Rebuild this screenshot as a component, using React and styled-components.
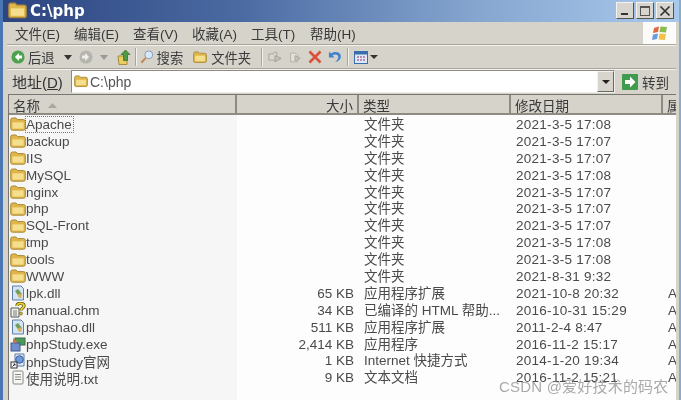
import React from 'react'
import styled, { createGlobalStyle } from 'styled-components'

const Global = createGlobalStyle`
  html, body { margin: 0; padding: 0; background: #d4d0c8; overflow: hidden; }
  * { box-sizing: border-box; }
`
const FONT = `"Liberation Sans", "Noto Sans CJK SC", sans-serif`

const Win = styled.div`
  width: 681px;
  height: 400px;
  display: flex;
  flex-direction: column;
  overflow: hidden;
  position: relative;
  font-family: ${FONT};
  color: #333;
  background: #d6d3cb;
  border-left: 3px solid #4a76b4;
  border-right: 2px solid #8fa9c8;
  filter: blur(0.4px);
`
const TitleBar = styled.div`
  height: 22px;
  flex: none;
  margin-left: -3px;
  margin-right: -2px;
  padding: 0 7px 1px 8px;
  display: flex;
  align-items: center;
  gap: 3px;
  background: linear-gradient(90deg, #2c4480 0%, #4b6aa2 35%, #86a6d0 70%, #a9c9ec 100%);
`
const TitleText = styled.div`
  flex: 1;
  color: #fff;
  font-size: 15px;
  font-weight: 700;
  font-family: "DejaVu Sans", sans-serif;
`
const WinBtns = styled.div`
  display: flex;
  gap: 2px;
`
const WinBtn = styled.div`
  width: 18px;
  height: 17px;
  background: #d8d5ce;
  border: 1px solid;
  border-color: #f4f2ee #55534e #55534e #f4f2ee;
  display: flex;
  align-items: center;
  justify-content: center;
`
const Body = styled.div`
  flex: 1;
  min-height: 0;
  display: flex;
  flex-direction: column;
  padding: 0 3px 0 4px;
`
const MenuBar = styled.div`
  height: 23px;
  flex: none;
  display: flex;
  align-items: center;
  padding-left: 8px;
  border-bottom: 1px solid #a9a69f;
`
const MenuItem = styled.div`
  width: 59px;
  font-size: 13.5px;
  color: #3a3a3a;
  white-space: nowrap;
`
const Logo = styled.div`
  margin-left: auto;
  width: 33px;
  height: 22px;
  background: #fbfbf9;
  display: flex;
  align-items: center;
  justify-content: center;
`
const Toolbar = styled.div`
  height: 24px;
  flex: none;
  display: flex;
  align-items: center;
  padding-left: 4px;
  border-top: 1px solid #f4f2ec;
  border-bottom: 1px solid #a9a69f;
`
const ToolLabel = styled.span`
  font-size: 13.3px;
  color: #3a3a3a;
  margin-left: ${p => p.$ml || 2}px;
  margin-right: ${p => p.$mr || 0}px;
  white-space: nowrap;
`
const Sep = styled.div`
  width: 2px;
  height: 18px;
  margin: ${p => p.$m || '0 4px'};
  border-left: 1px solid #a9a69f;
  border-right: 1px solid #f4f2ec;
`
const Tool = styled.svg`
  flex: none;
  margin-right: ${p => p.$mr || 0}px;
  margin-left: ${p => p.$ml || 0}px;
`
const AddressBar = styled.div`
  height: 24px;
  flex: none;
  display: flex;
  align-items: center;
  padding-left: 5px;
  border-top: 1px solid #f4f2ec;
`
const AddrLabel = styled.div`
  font-size: 15px;
  width: 59px;
  color: #333;
  white-space: nowrap;
`
const Combo = styled.div`
  width: 544px;
  height: 23px;
  background: #fff;
  border: 1px solid;
  border-color: #8e8b84 #f0eee8 #f0eee8 #8e8b84;
  display: flex;
  align-items: center;
  padding-left: 2px;
  gap: 2px;
  font-size: 14px;
  color: #555;
`
const ComboArrow = styled.div`
  margin-left: auto;
  width: 17px;
  height: 21px;
  background: #d8d5ce;
  border: 1px solid;
  border-color: #f4f2ee #6b6964 #6b6964 #f4f2ee;
  display: flex;
  align-items: center;
  justify-content: center;
`
const Go = styled.div`
  display: flex;
  align-items: center;
  gap: 4px;
  margin-left: 7px;
  font-size: 13.5px;
  color: #3a3a3a;
`
const ListFrame = styled.div`
  flex: 1;
  min-height: 0;
  margin-top: 1px;
  margin-left: 1px;
  background: linear-gradient(90deg, #f6f6f6 228px, #fdfdfd 228px);
  border-left: 1px solid #77756f;
  border-top: 1px solid #77756f;
  overflow: hidden;
`
const cols = '228px 122px 152px 152px 1fr'
const Header = styled.div`
  display: grid;
  grid-template-columns: ${cols};
  height: 20px;
  background: #d6d3cb;
  border-bottom: 2px solid #8e8b84;
`
const HeadCell = styled.div`
  font-size: 13.5px;
  color: #3a3a3a;
  padding: 0 4px;
  display: flex;
  align-items: center;
  justify-content: ${p => (p.$right ? 'flex-end' : 'flex-start')};
  gap: 8px;
  border-right: 2px solid #8e8b84;
  white-space: nowrap;
  &:last-child { border-right: 0; }
`
const Rows = styled.div`
  display: grid;
  grid-template-columns: ${cols};
  grid-auto-rows: 16.9px;
  padding-top: 1px;
`
const NameCell = styled.div`
  display: flex;
  align-items: center;
  padding-left: 1px;
  font-size: 13.5px;
  color: #4a4a4a;
  white-space: nowrap;
`
const NameText = styled.span`
  padding: 0 1px 0 0;
  outline: ${p => (p.$focus ? '1px dotted #777' : 'none')};
`
const Cell = styled.div`
  font-size: 13.5px;
  color: #4a4a4a;
  padding: ${p => (p.$right ? '0 5px 0 0' : '0 0 0 5px')};
  text-align: ${p => (p.$right ? 'right' : 'left')};
  letter-spacing: ${p => (p.$date ? '0.27px' : '0')};
  line-height: 17px;
  white-space: nowrap;
  overflow: hidden;
`
const Watermark = styled.div`
  position: absolute;
  left: 496px;
  top: 375px;
  font-size: 15px;
  letter-spacing: 0.2px;
  color: rgba(125, 125, 125, 0.65);
  white-space: nowrap;
`

const Folder = ({ size = 16 }) => (
  <svg width={size} height={size * 0.875} viewBox="0 0 16 14" style={{ flex: 'none' }}>
    <path d="M.7 3 Q.7 1 2.5 1 H6 L7.5 2.6 H13.5 Q15.3 2.6 15.3 4.5 V11.5 Q15.3 13.2 13.5 13.2 H2.5 Q.7 13.2 .7 11.5 Z" fill="#e0b64a" stroke="#a98a3a" />
    <path d="M2.4 5.4 H13.6 V11.6 H2.4 Z" fill="#f5df8e" />
  </svg>
)

const Dll = () => (
  <svg width="16" height="17" viewBox="0 0 16 17" style={{ flex: 'none' }}>
    <path d="M2.5 1 H11 L13.5 3.5 V15 H2.5 Z" fill="#d4e3f6" stroke="#5f7ea8" />
    <path d="M5 6 L8 4 L12 9 L9.5 12.5 Z" fill="#6f9f58" />
    <path d="M8 9 L11.5 8.5 L11.5 13 L8.5 12.5 Z" fill="#d8b258" />
  </svg>
)
const Chm = () => (
  <svg width="16" height="17" viewBox="0 0 16 17" style={{ flex: 'none' }}>
    <path d="M1 6 H9 V15 H1 Z" fill="#f2f2ec" stroke="#555" />
    <path d="M3 9 H7 M3 11 H7 M3 13 H7" stroke="#777" />
    <path d="M7 4 C7 .5 14 .5 14 4 C14 6 11 6 11 8.5" fill="none" stroke="#5c5427" strokeWidth="3.2" />
    <path d="M7 4 C7 .5 14 .5 14 4 C14 6 11 6 11 8.5" fill="none" stroke="#edd21f" strokeWidth="1.8" />
    <circle cx="11" cy="11.5" r="1.5" fill="#d8bd1c" stroke="#5c5427" strokeWidth=".6" />
  </svg>
)
const Exe = () => (
  <svg width="16" height="17" viewBox="0 0 16 17" style={{ flex: 'none' }}>
    <rect x="5" y="2" width="10" height="7" fill="#4d9a55" stroke="#3d6a45" />
    <rect x="1" y="7" width="9" height="8" fill="#6f8ecb" stroke="#3e5a8f" />
    <path d="M3 2 L8 6 L3 7.5 Z" fill="#c9774f" />
  </svg>
)
const Shortcut = () => (
  <svg width="16" height="17" viewBox="0 0 16 17" style={{ flex: 'none' }}>
    <path d="M5 2 H14 V14 H5 Z" fill="#e6eef8" stroke="#5c79a8" />
    <circle cx="9.5" cy="7.5" r="3.8" fill="#6d9adb" stroke="#3a5f9a" />
    <rect x="1" y="10" width="6" height="6" fill="#fff" stroke="#333" />
    <path d="M2.5 14.5 L5 12 M3.5 12 H5 V13.5" fill="none" stroke="#222" />
  </svg>
)
const Txt = () => (
  <svg width="16" height="17" viewBox="0 0 16 17" style={{ flex: 'none' }}>
    <rect x="3" y="2" width="10" height="13" rx="1" fill="#f7f7f2" stroke="#888" />
    <path d="M5 5.5 H11 M5 8 H11 M5 10.5 H11" stroke="#888" />
    <rect x="6" y="1" width="4" height="2" fill="#bbb" />
  </svg>
)

const d = '文件夹'
const rows = [
  ['Apache', '', d, '2021-3-5 17:08', '', Folder],
  ['backup', '', d, '2021-3-5 17:07', '', Folder],
  ['IIS', '', d, '2021-3-5 17:07', '', Folder],
  ['MySQL', '', d, '2021-3-5 17:08', '', Folder],
  ['nginx', '', d, '2021-3-5 17:07', '', Folder],
  ['php', '', d, '2021-3-5 17:07', '', Folder],
  ['SQL-Front', '', d, '2021-3-5 17:07', '', Folder],
  ['tmp', '', d, '2021-3-5 17:08', '', Folder],
  ['tools', '', d, '2021-3-5 17:08', '', Folder],
  ['WWW', '', d, '2021-8-31 9:32', '', Folder],
  ['lpk.dll', '65 KB', '应用程序扩展', '2021-10-8 20:32', 'A', Dll],
  ['manual.chm', '34 KB', '已编译的 HTML 帮助...', '2016-10-31 15:29', 'A', Chm],
  ['phpshao.dll', '511 KB', '应用程序扩展', '2011-2-4 8:47', 'A', Dll],
  ['phpStudy.exe', '2,414 KB', '应用程序', '2016-11-2 15:17', 'A', Exe],
  ['phpStudy官网', '1 KB', 'Internet 快捷方式', '2014-1-20 19:34', 'A', Shortcut],
  ['使用说明.txt', '9 KB', '文本文档', '2016-11-2 15:21', 'A', Txt],
]

const menus = ['文件(E)', '编辑(E)', '查看(V)', '收藏(A)', '工具(T)', '帮助(H)']

export default function App() {
  return (
    <Win>
      <Global />
      <TitleBar>
        <Folder size={19} />
        <TitleText>C:\php</TitleText>
        <WinBtns>
          <WinBtn>
            <svg width="10" height="10"><rect x="1" y="7" width="7" height="2" fill="#333" /></svg>
          </WinBtn>
          <WinBtn>
            <svg width="12" height="12"><rect x="1.5" y="1.5" width="9" height="9" fill="none" stroke="#555" /><rect x="1" y="1" width="10" height="2" fill="#555" /></svg>
          </WinBtn>
          <WinBtn>
            <svg width="12" height="12"><path d="M1.5 1.5 L10.5 10.5 M10.5 1.5 L1.5 10.5" stroke="#333" strokeWidth="1.7" /></svg>
          </WinBtn>
        </WinBtns>
      </TitleBar>
      <Body>
        <MenuBar>
          {menus.map(m => <MenuItem key={m}>{m}</MenuItem>)}
          <Logo>
            <svg width="18" height="17" viewBox="0 0 18 17">
              <path d="M3 3 L8 1.5 L7 7 L2 8 Z" fill="#e0693e" />
              <path d="M9.5 1.5 L16 2 L15 7.5 L8.5 7 Z" fill="#8cbb4f" />
              <path d="M2 9.5 L7 8.5 L6 14 L1 15 Z" fill="#6a9bdc" />
              <path d="M8.5 8.5 L15 9 L14 15 L7.5 14.5 Z" fill="#efc24a" />
            </svg>
          </Logo>
        </MenuBar>
        <Toolbar>
          <Tool width="14" height="14" viewBox="0 0 16 16">
            <circle cx="8" cy="8" r="7.5" fill="#4ea24e" />
            <path d="M9 3.5 L4.5 8 L9 12.5 V9.8 H12.5 V6.2 H9 Z" fill="#fff" />
          </Tool>
          <ToolLabel $ml={3}>后退</ToolLabel>
          <Tool $ml={9} width="8" height="5" viewBox="0 0 8 5"><path d="M0 0 H8 L4 5 Z" fill="#333" /></Tool>
          <Tool $ml={7} width="14" height="14" viewBox="0 0 16 16">
            <circle cx="8" cy="8" r="7.5" fill="#b6b4ae" />
            <path d="M7 3.5 L11.5 8 L7 12.5 V9.8 H3.5 V6.2 H7 Z" fill="#eeeeea" />
          </Tool>
          <Tool $ml={7} width="8" height="5" viewBox="0 0 8 5"><path d="M0 0 H8 L4 5 Z" fill="#999" /></Tool>
          <Tool $ml={9} width="14" height="17" viewBox="0 0 14 17">
            <path d="M1 7 H5 L10 7 V15.5 H2 Z" fill="#eccd62" stroke="#a58d3f" />
            <path d="M8.5 1 L13 5.5 H10.5 V11.5 H6.5 V5.5 H4 Z" fill="#4f9a45" stroke="#2c6b2c" strokeWidth=".7" />
          </Tool>
          <Sep $m="0 3px 0 4px" />
          <Tool width="14" height="16" viewBox="0 0 16 17">
            <circle cx="10" cy="6" r="4.5" fill="#d9e8f7" stroke="#7c93ad" />
            <path d="M6.5 9.5 L1.5 15" stroke="#c58a4f" strokeWidth="2.4" />
          </Tool>
          <ToolLabel $ml={3} $mr={10}>搜索</ToolLabel>
          <Folder size={14} />
          <ToolLabel $ml={4}>文件夹</ToolLabel>
          <Sep $m="0 5px 0 10px" />
          <Tool width="14" height="14" viewBox="0 0 16 15">
            <path d="M1 4 H6 L7 2 H10 V11 H1 Z" fill="#d9d7d0" stroke="#a5a29b" />
            <path d="M8 6 L15 9 L8 13 Z" fill="#c4c2bb" stroke="#9d9a93" />
          </Tool>
          <Tool $ml={6} width="14" height="14" viewBox="0 0 16 15">
            <path d="M3 3 H8 L11 5 V13 H3 Z" fill="#e2e0d9" stroke="#aeaba4" />
            <path d="M8 6 L14 9 L8 12 Z" fill="#c9c7c0" stroke="#a5a29b" />
          </Tool>
          <Tool $ml={6} width="14" height="14" viewBox="0 0 14 14">
            <path d="M1.5 1.5 L12.5 12.5 M12.5 1.5 L1.5 12.5" stroke="#d9503b" strokeWidth="2.6" />
          </Tool>
          <Tool $ml={6} width="14" height="14" viewBox="0 0 15 15">
            <path d="M1 2 V8 H7 L4.8 6 C7 4 10.5 4.5 11 7 C11.3 9 10 11 7.5 13 C11 12.5 14 10 13.8 6.5 C13.5 2.5 8 .5 3.4 3.8 Z" fill="#3f83d0" />
          </Tool>
          <Sep $m="0 5px" />
          <Tool width="14" height="13" viewBox="0 0 14 13">
            <rect x=".5" y=".5" width="13" height="12" fill="#dce9f9" stroke="#3a6cb0" />
            <rect x="1" y="1" width="12" height="2.5" fill="#3a6cb0" />
            <path d="M3 6 H5 M6 6 H8 M9 6 H11 M3 9 H5 M6 9 H8 M9 9 H11" stroke="#b56a9a" strokeWidth="1.5" />
          </Tool>
          <Tool $ml={2} width="8" height="4" viewBox="0 0 8 4"><path d="M0 0 H8 L4 4 Z" fill="#333" /></Tool>
        </Toolbar>
        <AddressBar>
          <AddrLabel>地址(<u>D</u>)</AddrLabel>
          <Combo>
            <Folder size={14} />
            C:\php
            <ComboArrow>
              <svg width="8" height="4"><path d="M0 0 H8 L4 4 Z" fill="#222" /></svg>
            </ComboArrow>
          </Combo>
          <Go>
            <svg width="16" height="16" viewBox="0 0 16 16">
              <rect width="16" height="16" rx="1" fill="#3f9b4d" />
              <path d="M8 2.5 L13.5 8 L8 13.5 V10 H3 V6 H8 Z" fill="#fff" />
            </svg>
            转到
          </Go>
        </AddressBar>
        <ListFrame>
          <Header>
            <HeadCell>
              名称
              <svg width="9" height="5"><path d="M0 5 H9 L4.5 0 Z" fill="#aaa79f" /></svg>
            </HeadCell>
            <HeadCell $right>大小</HeadCell>
            <HeadCell>类型</HeadCell>
            <HeadCell>修改日期</HeadCell>
            <HeadCell>属</HeadCell>
          </Header>
          <Rows>
            {rows.map(([name, size, type, date, attr, Icon], i) => (
              <React.Fragment key={name}>
                <NameCell><Icon /><NameText $focus={i === 0}>{name}</NameText></NameCell>
                <Cell $right>{size}</Cell>
                <Cell>{type}</Cell>
                <Cell $date>{date}</Cell>
                <Cell>{attr}</Cell>
              </React.Fragment>
            ))}
          </Rows>
        </ListFrame>
      </Body>
      <Watermark>CSDN @爱好技术的码农</Watermark>
    </Win>
  )
}
